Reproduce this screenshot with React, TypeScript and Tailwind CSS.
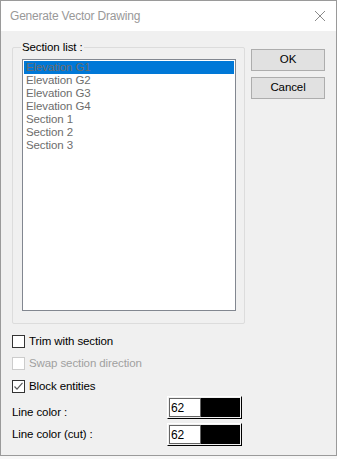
import React from "react";

const items = ["Elevation G1", "Elevation G2", "Elevation G3", "Elevation G4", "Section 1", "Section 2", "Section 3"];

function Check({ checked, disabled }: { checked?: boolean; disabled?: boolean }) {
  return (
    <div
      className={`w-[13px] h-[13px] border bg-white flex items-center justify-center shrink-0 ${
        disabled ? "border-[#cccccc]" : "border-[#333333]"
      }`}
    >
      {checked && (
        <svg width="11" height="11" viewBox="0 0 11 11">
          <path d="M1.5 5.5 L4 8.2 L9.5 1.8" fill="none" stroke="#5a5a5a" strokeWidth="1.2" />
        </svg>
      )}
    </div>
  );
}

function ColorBox() {
  return (
    <div className="w-[75px] h-[23px] border border-t-white border-l-white border-b-black border-r-black bg-[#f0f0f0] p-[1px] flex">
      <div className="w-[32px] h-full border border-[#646464] bg-white flex items-center pl-[1px] text-[12px] text-black leading-none">
        62
      </div>
      <div className="flex-1 h-full bg-black" />
    </div>
  );
}

export default function App() {
  return (
    <div
      className="w-[337px] h-[459px] bg-[#f7f7f7] text-[11.5px] text-black tracking-[-0.1px]"
      style={{ fontFamily: '"Liberation Sans", Arial, sans-serif' }}
    >
      <div className="w-[337px] h-[456px] border border-[#9a9a9a] flex flex-col">
        <div className="h-[30px] bg-white flex items-center justify-between pl-[9px] pr-[9px] shrink-0">
          <span className="text-[12px] text-[#999999] tracking-[-0.2px]">Generate Vector Drawing</span>
          <svg width="12" height="12" viewBox="0 0 12 12" className="mr-[1px]">
            <path d="M1 1 L11 11 M11 1 L1 11" stroke="#8a8a8a" strokeWidth="1" />
          </svg>
        </div>
        <div className="flex-1 bg-[#f0f0f0] flex flex-col pl-[11px]">
          <div className="flex items-start pt-[16px]">
            <div className="relative w-[233px] h-[277px] border border-[#dcdcdc] rounded-[2px] pt-[11px] pl-[9px]">
              <span className="absolute left-[8px] top-[-7px] bg-[#f0f0f0] px-[1px] leading-[13px]">Section list :</span>
              <div className="w-[214px] h-[252px] border border-[#828790] bg-white p-[1px] flex flex-col">
                {items.map((it, i) => (
                  <div
                    key={it}
                    className={`h-[13px] leading-[13px] pl-[2px] text-[#6d6d6d] ${i === 0 ? "bg-[#0078d7]" : ""}`}
                  >
                    {it}
                  </div>
                ))}
              </div>
            </div>
            <div className="flex flex-col gap-[6px] ml-[6px] mt-[2px]">
              <div className="w-[74px] h-[22px] border border-[#adadad] bg-[#e1e1e1] flex items-center justify-center">OK</div>
              <div className="w-[74px] h-[22px] border border-[#adadad] bg-[#e1e1e1] flex items-center justify-center">Cancel</div>
            </div>
          </div>
          <div className="flex flex-col mt-[11px]">
            <div className="flex items-center gap-[4px] h-[13px]">
              <Check />
              <span>Trim with section</span>
            </div>
            <div className="flex items-center gap-[4px] h-[13px] mt-[9px]">
              <Check disabled />
              <span className="text-[#a0a0a0]">Swap section direction</span>
            </div>
            <div className="flex items-center gap-[4px] h-[13px] mt-[10px]">
              <Check checked />
              <span>Block entities</span>
            </div>
          </div>
          <div className="flex items-start mt-[3px]">
            <span className="w-[155px] pt-[10px] leading-[13px]">Line color :</span>
            <ColorBox />
          </div>
          <div className="flex items-center mt-[4px]">
            <span className="w-[155px]">Line color (cut) :</span>
            <ColorBox />
          </div>
        </div>
      </div>
    </div>
  );
}
